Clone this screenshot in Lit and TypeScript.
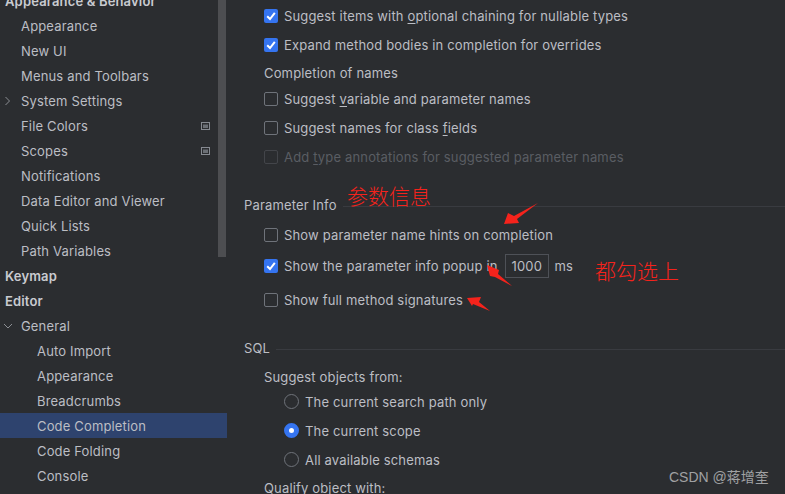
import { LitElement, css, html, svg } from "lit";
import { customElement } from "lit/decorators.js";

// level: 0 = bold root, 1 = child, 2 = nested child
const NAV = [
  { label: "Appearance & Behavior", level: 0 },
  { label: "Appearance", level: 1 },
  { label: "New UI", level: 1 },
  { label: "Menus and Toolbars", level: 1 },
  { label: "System Settings", level: 1, arrow: "right" },
  { label: "File Colors", level: 1, badge: true },
  { label: "Scopes", level: 1, badge: true },
  { label: "Notifications", level: 1 },
  { label: "Data Editor and Viewer", level: 1 },
  { label: "Quick Lists", level: 1 },
  { label: "Path Variables", level: 1 },
  { label: "Keymap", level: 0 },
  { label: "Editor", level: 0 },
  { label: "General", level: 1, arrow: "down" },
  { label: "Auto Import", level: 2 },
  { label: "Appearance", level: 2 },
  { label: "Breadcrumbs", level: 2 },
  { label: "Code Completion", level: 2, selected: true },
  { label: "Code Folding", level: 2 },
  { label: "Console", level: 2 },
];

const ARROWS = [
  "504,224 508,213 514,216 538,203 517,219 519,223",
  "487,265 499,270 498,274 512,286 495,277 490,276",
  "467,298 481,297 479,302 490,311 473,304 472,306",
];

@customElement("app-root")
export class AppRoot extends LitElement {
  private check(checked = false, disabled = false) {
    return html`<span class="box ${checked ? "on" : ""} ${disabled ? "off" : ""}">
      ${checked
        ? html`<svg width="14" height="14" viewBox="0 0 14 14"><path d="M3.2 7.2 6 10 10.8 3.8" fill="none" stroke="#fff" stroke-width="2"/></svg>`
        : ""}
    </span>`;
  }

  private navRow(item: any) {
    return html`<div class="nav-row l${item.level} ${item.selected ? "selected" : ""}">
      ${item.arrow === "right"
        ? html`<svg class="arrow right" width="8" height="10" viewBox="0 0 8 10"><path d="M1.5 1l4 4-4 4" fill="none" stroke="#8c8f94" stroke-width="1"/></svg>`
        : ""}
      ${item.arrow === "down"
        ? html`<svg class="arrow down" width="10" height="8" viewBox="0 0 10 8"><path d="M1 2l4 4 4-4" fill="none" stroke="#8c8f94" stroke-width="1"/></svg>`
        : ""}
      <span>${item.label}</span>
      ${item.badge
        ? html`<svg class="badge" width="9" height="8" viewBox="0 0 9 8"><rect width="9" height="8" fill="#868a91"/><rect x="1" y="1" width="7" height="6" fill="#2b2d30"/><rect x="2" y="2.5" width="5" height="3.5" fill="#6b6f75"/></svg>`
        : ""}
    </div>`;
  }

  protected render() {
    return html`
      <nav class="sidebar">
        <div class="tree">${NAV.map((n) => this.navRow(n))}</div>
        <div class="thumb"></div>
      </nav>
      <main class="panel">
        <div class="row h29 first">${this.check(true)}<span>Suggest items with <u>o</u>ptional chaining for nullable types</span></div>
        <div class="row h29">${this.check(true)}<span>Expand method bodies in completion for overrides</span></div>
        <div class="row label">Completion of names</div>
        <div class="row h29">${this.check()}<span>Suggest <u>v</u>ariable and parameter names</span></div>
        <div class="row h29">${this.check()}<span>Suggest names for class <u>f</u>ields</span></div>
        <div class="row h29 dim">${this.check(false, true)}<span>Add <u>t</u>ype annotations for suggested parameter names</span></div>

        <div class="section s1"><span>Parameter Info</span><i></i></div>
        <div class="row h31">${this.check()}<span>Show parameter name hints on completion</span></div>
        <div class="row h31">${this.check(true)}<span>Show the parameter info popup in</span><span class="field">1000</span><span class="unit">ms</span></div>
        <div class="row h37">${this.check()}<span>Show full method signatures</span></div>

        <div class="section s2"><span>SQL</span><i></i></div>
        <div class="row label sub">Suggest objects from:</div>
        <div class="row h29 radio tight"><span class="dot"></span><span>The current search path only</span></div>
        <div class="row h29 radio"><span class="dot on"></span><span>The current scope</span></div>
        <div class="row h29 radio"><span class="dot"></span><span>All available schemas</span></div>
        <div class="row label">Qualify object with:</div>
      </main>

      <svg class="marks" width="785" height="494" viewBox="0 0 785 494">
        ${ARROWS.map((p) => svg`<polygon points=${p} fill="#f5231c"/>`)}
      </svg>
      <span class="note n1">参数信息</span>
      <span class="note n2">都勾选上</span>
      <span class="mark">CSDN @蒋增奎</span>
    `;
  }

  static styles = css`
    :host {
      display: flex;
      position: relative;
      width: 785px;
      height: 494px;
      overflow: hidden;
      background: #2b2d30;
      color: #bcbec4;
      font-family: Inter, "Noto Sans CJK SC", sans-serif;
      font-size: 13px;
      letter-spacing: 0.16px;
    }

    .sidebar {
      position: relative;
      flex: none;
      width: 227px;
      height: 494px;
    }
    .tree {
      margin-top: -12px;
    }
    .nav-row {
      display: flex;
      align-items: center;
      position: relative;
      height: 25px;
      white-space: nowrap;
    }
    .l0 {
      padding-left: 5px;
      font-weight: 600;
      color: #c9cbd0;
    }
    .l1 {
      padding-left: 21px;
    }
    .l2 {
      padding-left: 37px;
    }
    .selected {
      background: #2e436e;
    }
    .arrow {
      position: absolute;
    }
    .arrow.right {
      left: 4px;
      top: 8px;
    }
    .arrow.down {
      left: 3px;
      top: 9px;
    }
    .badge {
      position: absolute;
      left: 201px;
      top: 9px;
    }
    .thumb {
      position: absolute;
      left: 218px;
      top: 0;
      width: 8px;
      height: 257px;
      background: #4d4e51;
    }

    .panel {
      flex: 1;
      min-width: 0;
      padding-left: 17px;
    }
    .row {
      display: flex;
      align-items: center;
      padding-left: 20px;
      white-space: nowrap;
    }
    .first {
      margin-top: 1px;
    }
    .h29 {
      height: 29px;
    }
    .h31 {
      height: 31px;
    }
    .h37 {
      height: 37px;
    }
    .label {
      height: 23px;
      margin-top: 2px;
    }
    .sub {
      margin-top: 7px;
    }
    .radio {
      padding-left: 40px;
    }
    .tight {
      margin-top: -1px;
    }
    .dim {
      color: #5a5d63;
    }
    u {
      text-underline-offset: 2px;
    }

    .box {
      flex: none;
      box-sizing: border-box;
      width: 14px;
      height: 14px;
      margin-right: 6px;
      border: 1px solid #6f737a;
      border-radius: 2px;
    }
    .box.on {
      border: none;
      background: #3574f0;
    }
    .box.off {
      border-color: #43454a;
    }
    .box svg {
      display: block;
    }

    .dot {
      flex: none;
      box-sizing: border-box;
      width: 15px;
      height: 15px;
      margin-right: 6px;
      border: 1px solid #6f737a;
      border-radius: 50%;
    }
    .dot.on {
      border: 5px solid #3574f0;
      background: #fff;
    }

    .section {
      display: flex;
      align-items: center;
      white-space: nowrap;
      gap: 6px;
      height: 20px;
    }
    .section i {
      flex: 1;
      height: 1px;
      margin-top: 3px;
      background: #393b40;
    }
    .s1 {
      margin-top: 24px;
      margin-bottom: 4px;
    }
    .s2 {
      margin-top: 20px;
    }

    .field {
      box-sizing: border-box;
      width: 44px;
      height: 24px;
      margin-left: 7px;
      padding-left: 6px;
      line-height: 22px;
      border: 1px solid #4e5157;
    }
    .unit {
      margin-left: 6px;
    }

    .marks {
      position: absolute;
      left: 0;
      top: 0;
      pointer-events: none;
    }
    .note {
      position: absolute;
      color: #f5231c;
      font-size: 21px;
      font-weight: 300;
      line-height: 24px;
      letter-spacing: 0;
      font-family: "Noto Sans CJK SC", sans-serif;
    }
    .n1 {
      left: 347px;
      top: 183px;
    }
    .n2 {
      left: 595px;
      top: 258px;
    }
    .mark {
      position: absolute;
      left: 669px;
      top: 468px;
      color: #a0a1a3;
      font-size: 14px;
      line-height: 18px;
      letter-spacing: 0;
      font-family: "Liberation Sans", "Noto Sans CJK SC", sans-serif;
    }
  `;
}
